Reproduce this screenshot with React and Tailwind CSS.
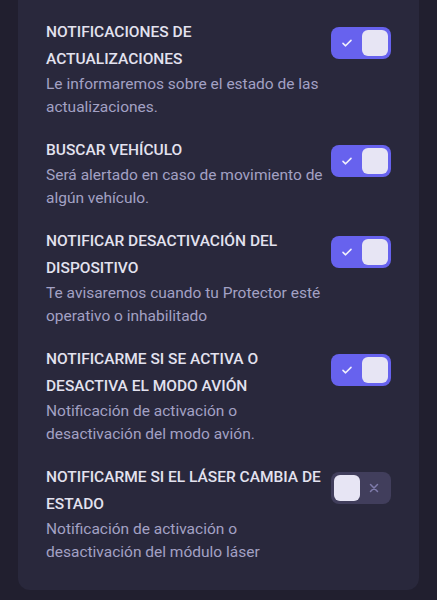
import React, { useState } from 'react';

const SETTINGS = [
  {
    id: 'updates',
    title: 'Notificaciones de actualizaciones',
    description: 'Le informaremos sobre el estado de las actualizaciones.',
    enabled: true,
  },
  {
    id: 'vehicle',
    title: 'Buscar vehículo',
    description: 'Será alertado en caso de movimiento de algún vehículo.',
    enabled: true,
  },
  {
    id: 'device',
    title: 'Notificar desactivación del dispositivo',
    description: 'Te avisaremos cuando tu Protector esté operativo o inhabilitado',
    enabled: true,
  },
  {
    id: 'airplane',
    title: 'Notificarme si se activa o desactiva el modo avión',
    description: 'Notificación de activación o desactivación del modo avión.',
    enabled: true,
  },
  {
    id: 'laser',
    title: 'Notificarme si el láser cambia de estado',
    description: 'Notificación de activación o desactivación del módulo láser',
    enabled: false,
  },
];

function Toggle({ checked, onChange }) {
  return (
    <button
      type="button"
      onClick={onChange}
      className={`shrink-0 w-[60px] h-[32px] rounded-[8px] p-[3px] flex items-center ${
        checked ? 'bg-[#6762ee] justify-end' : 'bg-[#413e5c] justify-start'
      }`}
    >
      {checked ? (
        <>
          <svg className="w-[12px] h-[12px] mr-[9px]" viewBox="0 0 12 12" fill="none">
            <path d="M2 6.3l2.6 2.5L10 3.4" stroke="#f1f0fb" strokeWidth="1.6" strokeLinecap="round" strokeLinejoin="round" />
          </svg>
          <span className="w-[26px] h-[26px] rounded-[6px] bg-[#e7e5f4]" />
        </>
      ) : (
        <>
          <span className="w-[26px] h-[26px] rounded-[6px] bg-[#e7e5f4]" />
          <svg className="w-[10px] h-[10px] ml-[9px]" viewBox="0 0 10 10" fill="none">
            <path d="M1.5 1.5l7 7M8.5 1.5l-7 7" stroke="#7f7bab" strokeWidth="1.5" strokeLinecap="round" />
          </svg>
        </>
      )}
    </button>
  );
}

export default function App() {
  const [settings, setSettings] = useState(SETTINGS);

  const toggle = (id) =>
    setSettings((list) => list.map((s) => (s.id === id ? { ...s, enabled: !s.enabled } : s)));

  return (
    <div className="min-h-[600px] bg-[#211f2f] px-[18px] pb-[13px] font-['Roboto',sans-serif]">
      <div className="bg-[#29283c] rounded-b-[12px] px-[28px] pt-[19px] pb-[26px] flex flex-col gap-[18px]">
        {settings.map((s) => (
          <div key={s.id} className="flex items-start gap-[4px]">
            <div className="flex-1">
              <div className="uppercase text-[15.5px] leading-[27px] font-medium text-[#e3e2ef]">{s.title}</div>
              <div className="text-[15.5px] leading-[23px] text-[#a3a1c4]">{s.description}</div>
            </div>
            <div className="mt-[8px]">
              <Toggle checked={s.enabled} onChange={() => toggle(s.id)} />
            </div>
          </div>
        ))}
      </div>
    </div>
  );
}
